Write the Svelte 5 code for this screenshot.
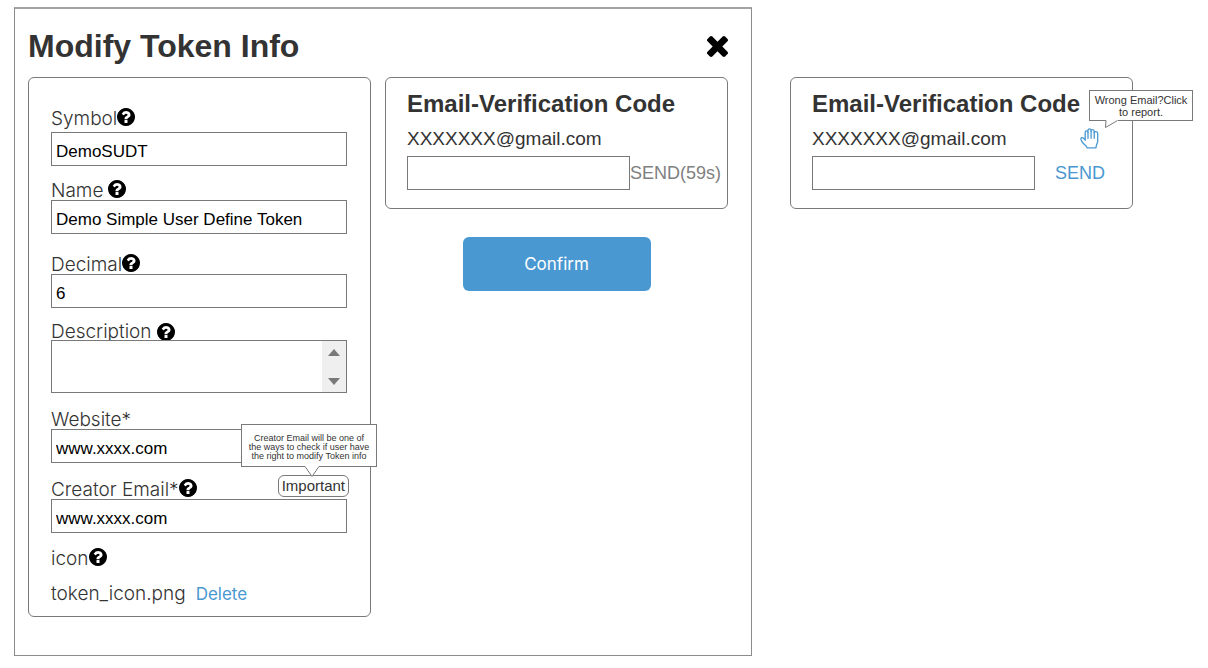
<script>
  let symbol = $state('DemoSUDT');
  let name = $state('Demo Simple User Define Token');
  let decimal = $state('6');
  let description = $state('');
  let website = $state('www.xxxx.com');
  let creatorEmail = $state('www.xxxx.com');
  let code = $state('');
  let reportCode = $state('');
</script>

{#snippet help(topic)}
  <button type="button" class="help" aria-label={'Help: ' + topic}>
    <svg viewBox="128 128 1536 1536" width="18" height="18" aria-hidden="true">
      <path d="M1024 1376v-192q0-14-9-23t-23-9h-192q-14 0-23 9t-9 23v192q0 14 9 23t23 9h192q14 0 23-9t9-23zm256-672q0-88-55.5-163t-138.5-116-170-41q-243 0-371 213-15 24 8 42l132 100q7 6 19 6 16 0 25-12 53-68 86-92 34-24 86-24 48 0 85.5 26t37.5 59q0 38-20 61t-68 45q-63 28-115.5 86.5t-52.5 125.5v36q0 14 9 23t23 9h192q14 0 23-9t9-23q0-19 21.5-49.5t54.5-49.5q32-18 49-28.5t46-35 44.5-48 28-60.5 12.5-81zm384 192q0 209-103 385.5t-279.5 279.5-385.5 103-385.5-103-279.5-279.5-103-385.5 103-385.5 279.5-279.5 385.5-103 385.5 103 279.5 279.5 103 385.5z" />
    </svg>
  </button>
{/snippet}

<main class="page">
  <section class="modal" aria-labelledby="modal-title">
    <header class="modal-head">
      <h1 id="modal-title">Modify Token Info</h1>
      <button type="button" class="close" aria-label="Close">
        <svg viewBox="110 366 1188 1188" width="21" height="21" aria-hidden="true">
          <path d="M1298 1322q0 40-28 68l-136 136q-28 28-68 28t-68-28l-294-294-294 294q-28 28-68 28t-68-28l-136-136q-28-28-28-68t28-68l294-294-294-294q-28-28-28-68t28-68l136-136q28-28 68-28t68 28l294 294 294-294q28-28 68-28t68 28l136 136q28 28 28 68t-28 68l-294 294 294 294q28 28 28 68z" />
        </svg>
      </button>
    </header>

    <div class="columns">
      <form class="card fields">
        <div class="field roomy">
          <div class="label-row"><label for="symbol">Symbol</label>{@render help('Symbol')}</div>
          <input id="symbol" type="text" bind:value={symbol} />
        </div>
        <div class="field near">
          <div class="label-row spaced"><label for="name">Name</label>{@render help('Name')}</div>
          <input id="name" type="text" bind:value={name} />
        </div>
        <div class="field apart">
          <div class="label-row"><label for="decimal">Decimal</label>{@render help('Decimal')}</div>
          <input id="decimal" type="text" bind:value={decimal} />
        </div>
        <div class="field">
          <div class="label-row spaced tight"><label for="description">Description</label>{@render help('Description')}</div>
          <div class="area">
            <textarea id="description" bind:value={description}></textarea>
            <div class="scroller" aria-hidden="true">
              <svg viewBox="0 0 12 7" width="12" height="7"><path d="M6 0 12 7H0z" /></svg>
              <svg viewBox="0 0 12 7" width="12" height="7"><path d="M0 0h12L6 7z" /></svg>
            </div>
          </div>
        </div>
        <div class="field">
          <div class="label-row"><label for="website">Website*</label></div>
          <input id="website" type="text" bind:value={website} />
        </div>
        <div class="field">
          <div class="label-row">
            <label for="creator">Creator Email*</label>{@render help('Creator Email')}
            <div class="badge">
              <button type="button" class="important" aria-describedby="creator-tip">Important</button>
              <div class="tip creator-tip" id="creator-tip" role="tooltip">
                Creator Email will be one of<br />the ways to check if user have<br />the right to modify Token info
                <svg class="tail" viewBox="0 0 14 11" width="14" height="11" aria-hidden="true">
                  <path class="notch" d="M0-1H14V0L7 10 0 0z" />
                  <path d="M0-.5 7 9.500 14-.5" />
                </svg>
              </div>
            </div>
          </div>
          <input id="creator" type="text" bind:value={creatorEmail} />
        </div>
        <div class="field plain">
          <div class="label-row"><span>icon</span>{@render help('icon')}</div>
        </div>
        <div class="field plain">
          <div class="label-row file"><span>token_icon.png</span><button type="button" class="link">Delete</button></div>
        </div>
      </form>

      <div class="side">
        <section class="card verify">
          <h2><label for="code">Email-Verification Code</label></h2>
          <div class="address"><span>XXXXXXX@gmail.com</span></div>
          <div class="code-row">
            <input id="code" type="text" bind:value={code} />
            <button type="button" class="send" disabled>SEND(59s)</button>
          </div>
        </section>
        <button type="submit" class="confirm">Confirm</button>
      </div>
    </div>
  </section>

  <section class="card verify standalone">
    <h2><label for="report-code">Email-Verification Code</label></h2>
    <div class="address">
      <span>XXXXXXX@gmail.com</span>
      <div class="report">
        <button type="button" class="hand" aria-label="Report wrong email" aria-describedby="report-tip">
          <svg viewBox="0 0 20 21" width="20" height="21" aria-hidden="true">
            <path d="M5.2 12.2V4.4c0-2 2.600-2 2.800-.1V2.400c0-2 2.900-2 3.100 0v.6c.3-1.900 3-1.700 3.100.3v1.300c.4-1.500 3.300-1.400 3.500.7V13c0 2-1 3-1.300 4.500l-.5 2.300H7.200L5.800 17.600C4.500 16.500 3 15.400 2 13.700L1 11.400C.5 9.600 2.500 9 3.600 10.300z" />
            <path d="M8 4.300v6M11.100 3v7.300M14.200 4.500v5.800" />
          </svg>
        </button>
        <div class="tip report-tip" id="report-tip" role="tooltip">
          Wrong Email?Click<br />to report.
          <svg class="tail" viewBox="0 0 13 8" width="13" height="8" aria-hidden="true">
            <path class="notch" d="M1-1H13V0L.5 7 1 0z" />
            <path d="M1-.5 .5 6.500 12.500-.5" />
          </svg>
        </div>
      </div>
    </div>
    <div class="code-row">
      <input id="report-code" type="text" bind:value={reportCode} />
      <button type="button" class="send active">SEND</button>
    </div>
  </section>
</main>

<style>
  :global(body) {
    background: #fff;
  }

  .page {
    box-sizing: border-box;
    display: grid;
    grid-template-columns: minmax(0, 738fr) minmax(0, 343fr);
    gap: 38px;
    align-items: start;
    padding: 7px 75px 12px 14px;
    font-family: 'Liberation Sans', Arial, sans-serif;
    color: #333;
  }

  button {
    padding: 0;
    border: 0;
    background: none;
    font: inherit;
    color: inherit;
    cursor: pointer;
  }

  svg {
    display: block;
  }

  h1,
  h2 {
    margin: 0;
    font-weight: 700;
  }

  .modal {
    border: 1px solid #8c8c8c;
    border-top: 2px solid #a3a3a3;
    padding: 18px 23px 38px 13px;
  }

  .modal-head {
    display: flex;
    justify-content: space-between;
    align-items: center;
    height: 38px;
    margin-bottom: 12px;
  }

  .help,
  .close {
    color: #000;
  }

  h1 {
    font-size: 32px;
    line-height: 38px;
  }

  h2 {
    font-size: 24px;
    line-height: 28px;
    white-space: nowrap;
  }

  .columns {
    display: grid;
    grid-template-columns: repeat(2, minmax(0, 1fr));
    gap: 14px;
    align-items: start;
  }

  .card {
    box-sizing: border-box;
    border: 1px solid #797979;
    border-radius: 6px;
    background: #fff;
  }

  .fields {
    display: flex;
    flex-direction: column;
    gap: 14px;
    padding: 30px 23px 13px 22px;
  }

  .field {
    display: flex;
    flex-direction: column;
    padding-top: 2px;
  }

  .roomy {
    gap: 4px;
    padding-top: 0;
  }

  .near {
    padding-top: 0;
  }

  .apart {
    padding-top: 6px;
  }

  .plain {
    padding-top: 1px;
  }

  .label-row {
    position: relative;
    display: flex;
    align-items: flex-start;
    height: 20px;
    font-family: Inter, sans-serif;
    font-size: 19px;
    font-weight: 300;
    line-height: 22px;
    white-space: nowrap;
  }

  .spaced {
    gap: 5px;
  }

  .tight {
    align-items: center;
    height: 16px;
  }

  .file {
    gap: 10px;
  }

  .link {
    font-size: 17px;
    font-weight: 400;
    color: #4998d1;
  }

  input,
  textarea {
    box-sizing: border-box;
    width: 100%;
    margin: 0;
    border: 1px solid #797979;
    border-radius: 0;
    background: #fff;
    font-family: 'Liberation Sans', Arial, sans-serif;
    font-size: 17px;
    color: #000;
    outline: 0;
  }

  input {
    height: 34px;
    padding: 5px 4px 0;
  }

  .area {
    position: relative;
    display: flex;
    box-sizing: border-box;
    height: 53px;
    border: 1px solid #797979;
    background: #fff;
  }

  textarea {
    flex: 1;
    height: 100%;
    padding: 4px;
    border: 0;
    resize: none;
  }

  .scroller {
    display: flex;
    flex-direction: column;
    justify-content: space-between;
    align-items: center;
    width: 24px;
    padding: 8px 0 7px;
    box-sizing: border-box;
    background: #efefef;
    fill: #797979;
  }

  .badge {
    position: absolute;
    right: -2px;
    bottom: 2px;
    font-family: 'Liberation Sans', Arial, sans-serif;
    font-weight: 400;
  }

  .important {
    display: block;
    box-sizing: border-box;
    height: 22px;
    padding: 0 3px;
    border: 1px solid #797979;
    border-radius: 6px;
    background: #fff;
    font-size: 15px;
    line-height: 20px;
  }

  .tip {
    position: absolute;
    z-index: 1;
    box-sizing: border-box;
    border: 1px solid #797979;
    background: #fff;
    text-align: center;
    white-space: nowrap;
  }

  .creator-tip {
    right: -28px;
    bottom: 30px;
    width: 136px;
    padding: 9px 0 5px;
    font-size: 9px;
    line-height: 9px;
  }

  .tail {
    position: absolute;
    top: 100%;
    margin-top: 1px;
    overflow: visible;
    fill: none;
    stroke: #797979;
  }

  .notch {
    fill: #fff;
    stroke: none;
  }

  .creator-tip .tail {
    left: 63px;
  }

  .side {
    display: flex;
    flex-direction: column;
    align-items: center;
    gap: 28px;
  }

  .verify {
    width: 100%;
    padding: 12px 0 18px 21px;
  }

  .standalone {
    margin-top: 70px;
  }

  .address {
    display: flex;
    justify-content: space-between;
    align-items: flex-start;
    height: 22px;
    margin: 10px 32px 6px 0;
    font-size: 19px;
    line-height: 22px;
  }

  .code-row {
    display: flex;
    align-items: center;
  }

  .code-row input {
    flex: 0 1 223px;
    min-width: 0;
  }

  .send {
    flex: none;
    font-size: 18px;
    line-height: 20px;
    color: #808080;
  }

  .active {
    margin-left: 20px;
    color: #4998d1;
  }

  .report {
    position: relative;
  }

  .hand {
    display: block;
  }

  .hand svg {
    fill: none;
    stroke: #4998d1;
    stroke-width: 1.3;
    stroke-linejoin: round;
    stroke-linecap: round;
  }

  .report-tip {
    left: 9px;
    bottom: 28px;
    width: 104px;
    padding: 3px 0 2px;
    font-size: 11px;
    line-height: 12px;
  }

  .report-tip .tail {
    left: 15px;
  }

  .confirm {
    width: 188px;
    height: 54px;
    border-radius: 6px;
    background: #4998d1;
    font-family: Inter, sans-serif;
    font-size: 17px;
    color: #fff;
  }
</style>
